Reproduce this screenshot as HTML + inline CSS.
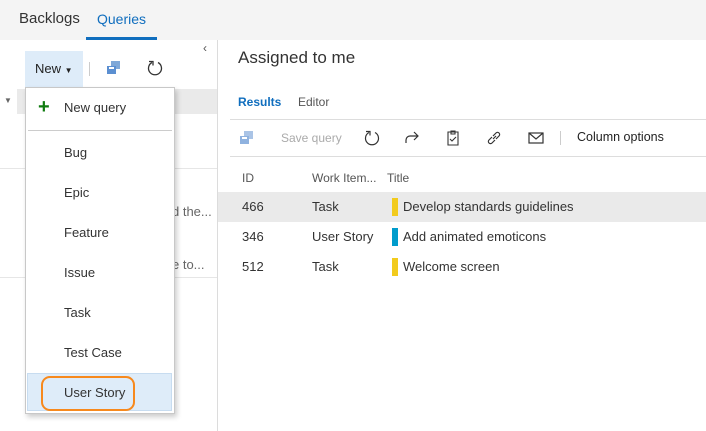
<!DOCTYPE html>
<html><head><style>
body{margin:0;width:706px;height:431px;overflow:hidden;font-family:"Segoe UI","Liberation Sans",sans-serif;background:#fff;position:relative;color:#333}
.a{position:absolute;white-space:nowrap}
</style></head><body>
<div class="a" style="left:0;top:0;width:706px;height:40px;background:#f4f4f4"></div>
<div class="a" style="left:19px;top:10px;font-size:15px;color:#333">Backlogs</div>
<div class="a" style="left:97px;top:11px;font-size:14px;color:#106ebe">Queries</div>
<div class="a" style="left:86px;top:37px;width:71px;height:3px;background:#106ebe"></div>
<div class="a" style="left:217px;top:40px;width:1px;height:391px;background:#dcdcdc"></div>
<div class="a" style="left:203px;top:41px;font-size:12px;color:#555">‹</div>
<div class="a" style="left:25px;top:51px;width:58px;height:36px;background:#deecf9"></div>
<div class="a" style="left:35px;top:61px;font-size:13px;color:#222">New <span style="font-size:8px">▼</span></div>
<div class="a" style="left:89px;top:62px;width:1px;height:14px;background:#ccc"></div>
<svg class="a" style="left:106px;top:60px" width="16" height="16"><rect x="5" y="1" width="9" height="8" fill="#7fa8d8"/><rect x="1" y="6" width="9" height="8" fill="#5b8fd1"/><rect x="3" y="7" width="5" height="2" fill="#fff"/></svg>
<svg class="a" style="left:146px;top:59px" width="18" height="18"><path d="M6 3.5A6.5 6.5 0 1 0 12 3.5" fill="none" stroke="#333" stroke-width="1.3"/><path d="M3 2.5h4v4" fill="none" stroke="#333" stroke-width="1.3"/></svg>
<div class="a" style="left:17px;top:89px;width:200px;height:25px;background:#eaeaea"></div>
<div class="a" style="left:4px;top:96px;font-size:8px;color:#666">▼</div>
<div class="a" style="left:0;top:168px;width:217px;height:1px;background:#e6e6e6"></div>
<div class="a" style="left:0;top:277px;width:217px;height:1px;background:#e6e6e6"></div>
<div class="a" style="left:172px;top:204px;font-size:13px;color:#666">d the...</div>
<div class="a" style="left:172px;top:257px;font-size:13px;color:#666">e to...</div>
<div class="a" style="left:25px;top:87px;width:148px;height:325px;background:#fff;border:1px solid #c8c8c8;box-shadow:2px 3px 5px rgba(0,0,0,.2)"></div>
<div class="a" style="left:38px;top:96px;font-size:20px;color:#107c10;font-weight:bold">+</div>
<div class="a" style="left:64px;top:100px;font-size:13px">New query</div>
<div class="a" style="left:28px;top:130px;width:144px;height:1px;background:#ccc"></div>
<div class="a" style="left:27px;top:373px;width:145px;height:38px;background:#deecf9;border:1px solid #c7dcf0;box-sizing:border-box"></div>
<div class="a" style="left:41px;top:376px;width:94px;height:35px;border:2px solid #f7891d;border-radius:9px;box-sizing:border-box"></div>
<div class="a" style="left:64px;top:145px;font-size:13px;line-height:16px">Bug</div>
<div class="a" style="left:64px;top:185px;font-size:13px;line-height:16px">Epic</div>
<div class="a" style="left:64px;top:225px;font-size:13px;line-height:16px">Feature</div>
<div class="a" style="left:64px;top:265px;font-size:13px;line-height:16px">Issue</div>
<div class="a" style="left:64px;top:305px;font-size:13px;line-height:16px">Task</div>
<div class="a" style="left:64px;top:345px;font-size:13px;line-height:16px">Test Case</div>
<div class="a" style="left:64px;top:385px;font-size:13px;line-height:16px">User Story</div>
<div class="a" style="left:238px;top:48px;font-size:17px;color:#333">Assigned to me</div>
<div class="a" style="left:238px;top:95px;font-size:12px;color:#106ebe;font-weight:bold">Results</div>
<div class="a" style="left:298px;top:95px;font-size:12px;color:#555">Editor</div>
<div class="a" style="left:230px;top:119px;width:476px;height:1px;background:#ddd"></div>
<svg class="a" style="left:239px;top:130px" width="16" height="16"><rect x="5" y="1" width="9" height="8" fill="#aac4e6"/><rect x="1" y="6" width="9" height="8" fill="#8fb2df"/><rect x="3" y="7" width="5" height="2" fill="#fff"/></svg>
<div class="a" style="left:281px;top:131px;font-size:12px;color:#aaa">Save query</div>
<svg class="a" style="left:363px;top:129px" width="18" height="18"><path d="M6 3.5A6.5 6.5 0 1 0 12 3.5" fill="none" stroke="#333" stroke-width="1.2"/><path d="M3 2.5h4v4" fill="none" stroke="#333" stroke-width="1.2"/></svg>
<svg class="a" style="left:404px;top:130px" width="16" height="16"><path d="M2 13V10a4 4 0 0 1 4-4h8M10 2l4 4-4 4" fill="none" stroke="#333" stroke-width="1.2"/></svg>
<svg class="a" style="left:445px;top:129px" width="16" height="18"><path d="M3 3h10v13H3z M6 2h4v3H6z M5 10l2 2 4-4" fill="none" stroke="#333" stroke-width="1.1"/></svg>
<svg class="a" style="left:486px;top:130px" width="16" height="16"><path d="M7 9l3-3M6 7l-3 3a2 2 0 0 0 3 3l3-3M10 9l3-3a2 2 0 0 0-3-3L7 6" fill="none" stroke="#333" stroke-width="1.2"/></svg>
<svg class="a" style="left:528px;top:132px" width="16" height="12"><rect x="1" y="1" width="14" height="10" fill="none" stroke="#333" stroke-width="1.2"/><path d="M1 1l7 6 7-6" fill="none" stroke="#333" stroke-width="1.2"/></svg>
<div class="a" style="left:560px;top:131px;width:1px;height:14px;background:#ccc"></div>
<div class="a" style="left:577px;top:130px;font-size:12.5px;color:#222">Column options</div>
<div class="a" style="left:230px;top:156px;width:476px;height:1px;background:#ddd"></div>
<div class="a" style="left:242px;top:171px;font-size:12px;color:#555">ID</div>
<div class="a" style="left:312px;top:171px;font-size:12px;color:#555">Work Item...</div>
<div class="a" style="left:387px;top:171px;font-size:12px;color:#555">Title</div>
<div class="a" style="left:218px;top:192px;width:488px;height:30px;background:#eaeaea"></div>
<div class="a" style="left:242px;top:199px;font-size:13px">466</div><div class="a" style="left:312px;top:199px;font-size:13px">Task</div>
<div class="a" style="left:392px;top:198px;width:6px;height:18px;background:#f2cb1d"></div><div class="a" style="left:403px;top:199px;font-size:13px">Develop standards guidelines</div>
<div class="a" style="left:242px;top:229px;font-size:13px">346</div><div class="a" style="left:312px;top:229px;font-size:13px">User Story</div>
<div class="a" style="left:392px;top:228px;width:6px;height:18px;background:#009ccc"></div><div class="a" style="left:403px;top:229px;font-size:13px">Add animated emoticons</div>
<div class="a" style="left:242px;top:259px;font-size:13px">512</div><div class="a" style="left:312px;top:259px;font-size:13px">Task</div>
<div class="a" style="left:392px;top:258px;width:6px;height:18px;background:#f2cb1d"></div><div class="a" style="left:403px;top:259px;font-size:13px">Welcome screen</div>
</body></html>
